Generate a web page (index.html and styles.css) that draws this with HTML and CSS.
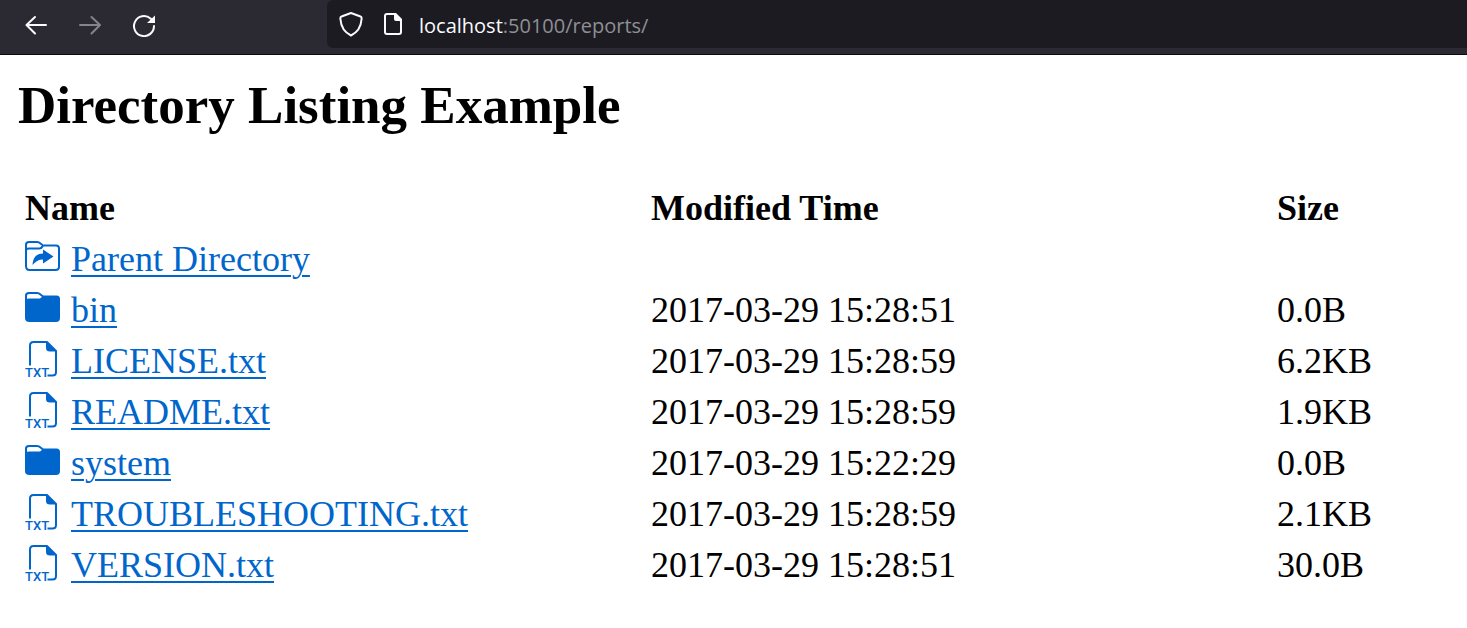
FILE: index.html
```html
<!DOCTYPE html>
<html lang="en">
<head>
<meta charset="utf-8">
<title>Directory Listing Example</title>
<link rel="stylesheet" href="styles.css">
</head>
<body>
<header class="toolbar">
  <nav class="controls" aria-label="Browser controls">
    <button class="control" type="button" aria-label="Back"><svg viewBox="0 0 24 24"><path d="M22 12H3M11 4L2.500 12L11 20.500"/></svg></button>
    <button class="control" type="button" aria-label="Forward" disabled><svg viewBox="0 0 24 24"><path d="M2 12H21.500M13.500 4L22 12L13.500 20.500"/></svg></button>
    <button class="control" type="button" aria-label="Reload"><svg viewBox="0 0 24 24"><path d="M22 13A10 10 0 1 1 18.500 5.500L20 7"/><path class="solid" d="M23 2.500V10H15Z"/></svg></button>
  </nav>
  <div class="address">
    <svg class="shield" viewBox="0 0 24 26"><path d="M12 2L21.500 5.500Q23 6 22.500 8.500C22 16 18 21.500 12 24.500C6 21.500 2 16 1.500 8.500Q1 6 2.500 5.500Z"/></svg>
    <svg class="page-icon" viewBox="0 0 20 24"><path d="M12 2H4Q2 2 2 4V20Q2 22 4 22H16Q18 22 18 20V9Z"/><path class="solid" d="M11 1H13L19 7V9H13Q11 9 11 7Z"/></svg>
    <div class="url"><span class="host">localhost</span>:50100/reports/</div>
  </div>
</header>
<main class="listing">
  <h1 class="title">Directory Listing Example</h1>
  <table class="files">
    <thead><tr><th>Name</th><th>Modified Time</th><th>Size</th></tr></thead>
    <tbody>
      <tr><td><div class="entry"><svg class="icon" viewBox="0 0 36 36"><path class="line" d="M1 27V5.500Q1 3 4 3H12Q14 3 15.500 4.500L18 6.500H31Q34 6.500 34 9.500V27.500Q34 31 30.500 31H4.500Q1 31 1 27ZM1 11.500Q1 9.500 4 9.500H14.500Q16.500 9.500 18 6.500"/><path d="M7.500 26C8 18 12 14.500 18 14.500V10.500L28.500 17.500L18 24.500V20.500C13.500 20.500 10.500 22.500 7.500 26Z"/></svg><a href="#">Parent Directory</a></div></td><td></td><td></td></tr>
      <tr><td><div class="entry"><svg class="icon" viewBox="0 0 36 36"><path d="M0 11Q0.500 8.500 4 8.500H15L18.500 5.500H31.500Q35 5.500 35 9V28Q35 32 31 32H4.500Q0 32 0 28Z"/><path class="line" d="M1 12V5.500Q1 3 4 3H12Q14 3 15.500 4.500L18 6.500"/></svg><a href="#">bin</a></div></td><td>2017-03-29 15:28:51</td><td>0.0B</td></tr>
      <tr><td><div class="entry"><svg class="icon" viewBox="0 0 36 36"><path class="line" d="M5 24.500V4.500Q5 1 8.500 1H22L31 10V31Q31 34.500 27.500 34.500H22.500"/><path d="M21 0.500L32 10.500H25Q21 10.500 21 7Z"/><text x="0" y="36">TXT</text></svg><a href="#">LICENSE.txt</a></div></td><td>2017-03-29 15:28:59</td><td>6.2KB</td></tr>
      <tr><td><div class="entry"><svg class="icon" viewBox="0 0 36 36"><path class="line" d="M5 24.500V4.500Q5 1 8.500 1H22L31 10V31Q31 34.500 27.500 34.500H22.500"/><path d="M21 0.500L32 10.500H25Q21 10.500 21 7Z"/><text x="0" y="36">TXT</text></svg><a href="#">README.txt</a></div></td><td>2017-03-29 15:28:59</td><td>1.9KB</td></tr>
      <tr><td><div class="entry"><svg class="icon" viewBox="0 0 36 36"><path d="M0 11Q0.500 8.500 4 8.500H15L18.500 5.500H31.500Q35 5.500 35 9V28Q35 32 31 32H4.500Q0 32 0 28Z"/><path class="line" d="M1 12V5.500Q1 3 4 3H12Q14 3 15.500 4.500L18 6.500"/></svg><a href="#">system</a></div></td><td>2017-03-29 15:22:29</td><td>0.0B</td></tr>
      <tr><td><div class="entry"><svg class="icon" viewBox="0 0 36 36"><path class="line" d="M5 24.500V4.500Q5 1 8.500 1H22L31 10V31Q31 34.500 27.500 34.500H22.500"/><path d="M21 0.500L32 10.500H25Q21 10.500 21 7Z"/><text x="0" y="36">TXT</text></svg><a href="#">TROUBLESHOOTING.txt</a></div></td><td>2017-03-29 15:28:59</td><td>2.1KB</td></tr>
      <tr><td><div class="entry"><svg class="icon" viewBox="0 0 36 36"><path class="line" d="M5 24.500V4.500Q5 1 8.500 1H22L31 10V31Q31 34.500 27.500 34.500H22.500"/><path d="M21 0.500L32 10.500H25Q21 10.500 21 7Z"/><text x="0" y="36">TXT</text></svg><a href="#">VERSION.txt</a></div></td><td>2017-03-29 15:28:51</td><td>30.0B</td></tr>
    </tbody>
  </table>
</main>
</body>
</html>
```
FILE: styles.css
```css
body {
  margin: 0;
  background: #fff;
  color: #000;
  font-family: "Liberation Serif", "Times New Roman", serif;
}
.toolbar {
  display: flex;
  padding-bottom: 6px;
  background: #2b2a33;
  border-bottom: 1px solid #0c0c0d;
}
.controls {
  display: flex;
  align-items: center;
  gap: 30px;
  box-sizing: border-box;
  width: 327px;
  padding: 2px 24px 0;
}
.control {
  display: flex;
  padding: 0;
  border: 0;
  background: none;
  color: #fbfbfe;
}
.control:disabled { color: #85848a; }
.control svg { width: 24px; height: 24px; }
.toolbar svg {
  flex: none;
  fill: none;
  stroke: currentColor;
  stroke-width: 2;
  stroke-linecap: round;
  stroke-linejoin: round;
}
.toolbar .solid { fill: currentColor; stroke: none; }
.address {
  display: flex;
  flex: 1;
  align-items: center;
  height: 48px;
  padding-left: 12px;
  border-radius: 6px 0 0 6px;
  background: #1c1b22;
  color: #fbfbfe;
}
.shield { width: 24px; height: 26px; }
.page-icon { width: 20px; height: 24px; margin: 0 16px 0 20px; }
.url {
  padding-top: 3px;
  color: #8f8f94;
  font: 20px/28px "Open Sans", "Noto Sans", sans-serif;
}
.host { color: #fbfbfe; }
.listing { padding: 20px 0 32px 18px; }
.title { margin: 0 0 48px; font-size: 53px; line-height: 60px; }
.files {
  width: 100%;
  table-layout: fixed;
  border-collapse: collapse;
  font-size: 36px;
  line-height: 51px;
  text-align: left;
}
.files th, .files td { box-sizing: border-box; height: 51px; padding: 0 0 0 7px; }
.files th { width: 43.2%; }
.files th:last-child { width: auto; }
.entry { display: flex; align-items: center; gap: 10px; }
.icon {
  flex: none;
  width: 36px;
  height: 36px;
  margin-bottom: 6px;
  overflow: visible;
  fill: #06c;
  font: 500 13px/1 Roboto, "Liberation Sans", sans-serif;
}
.icon .line {
  fill: none;
  stroke: #06c;
  stroke-width: 2;
  stroke-linejoin: round;
}
.files a {
  color: #06c;
  text-decoration-thickness: 2px;
  text-underline-offset: 4px;
}
```
